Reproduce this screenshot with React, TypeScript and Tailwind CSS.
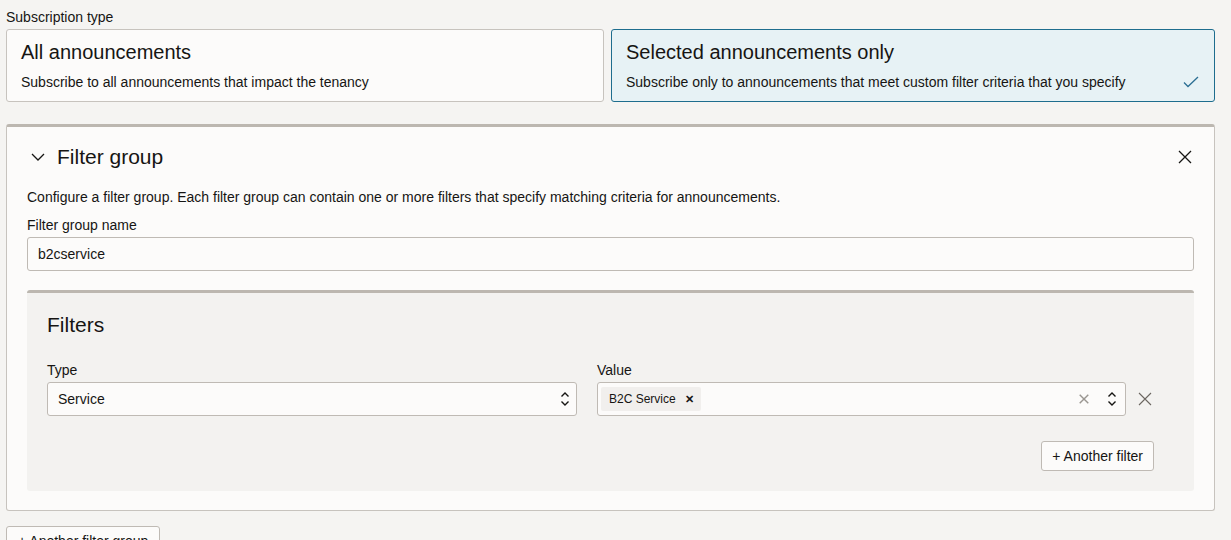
import React from 'react';

const font = "font-['Liberation_Sans',Arial,sans-serif]";

const UpDown: React.FC = () => (
  <svg width="10" height="16" viewBox="0 0 10 16" fill="none" stroke="#161513" strokeWidth="1.4">
    <path d="M1.5 5.5 L5 2 L8.5 5.5" />
    <path d="M1.5 10.5 L5 14 L8.5 10.5" />
  </svg>
);

const Cross: React.FC<{ size?: number; color?: string; width?: number }> = ({ size = 14, color = '#161513', width = 1.3 }) => (
  <svg width={size} height={size} viewBox="0 0 14 14" fill="none" stroke={color} strokeWidth={width}>
    <path d="M1 1 L13 13 M13 1 L1 13" />
  </svg>
);

const App: React.FC = () => {
  return (
    <div className={`${font} min-h-[540px] bg-[#f5f4f2] px-[6px] pt-[9px] text-[#161513]`}>
      <div className="mb-[4px] text-[14px] leading-[16px]">Subscription type</div>

      {/* subscription type cards */}
      <div className="grid grid-cols-[598px_1fr] gap-[7px] w-[1209px]">
        <div className="h-[73px] rounded-[3px] border border-[#c7c3be] bg-[#fcfbfa] px-[14px] pt-[10px]">
          <div className="text-[20px] leading-[24px]">All announcements</div>
          <div className="mt-[10px] text-[14px] leading-[16px]">Subscribe to all announcements that impact the tenancy</div>
        </div>
        <div className="h-[73px] rounded-[3px] border border-[#1e6d8e] bg-[#e7f2f5] pl-[14px] pr-[15px] pt-[10px]">
          <div className="text-[20px] leading-[24px]">Selected announcements only</div>
          <div className="mt-[10px] flex items-center justify-between text-[14px] leading-[16px]">
            <span>Subscribe only to announcements that meet custom filter criteria that you specify</span>
            <svg width="16" height="12" viewBox="0 0 16 12" fill="none" stroke="#2c6f93" strokeWidth="1.3">
              <path d="M1 6.5 L5 10.5 L15 1" />
            </svg>
          </div>
        </div>
      </div>

      {/* filter group panel */}
      <div className="mt-[22px] w-[1209px] rounded-[3px] border border-t-[3px] border-[#c7c3be] border-t-[#bcb7b0] bg-[#fcfbfa] px-[20px] pb-[19px]">
        <div className="flex h-[58px] items-center justify-between pt-[2px]">
          <div className="flex items-center gap-[12px]">
            <svg className="ml-[4px]" width="14" height="8" viewBox="0 0 14 8" fill="none" stroke="#161513" strokeWidth="1.3">
              <path d="M1 1 L7 7 L13 1" />
            </svg>
            <span className="text-[21px] leading-[24px]">Filter group</span>
          </div>
          <div className="mr-[2px]">
            <Cross />
          </div>
        </div>

        <div className="mt-[4px] text-[14px] leading-[16px]">
          Configure a filter group. Each filter group can contain one or more filters that specify matching criteria for announcements.
        </div>
        <div className="mt-[12px] text-[14px] leading-[16px]">Filter group name</div>
        <div className="mt-[4px] flex h-[34px] items-center rounded-[3px] border border-[#bfbab4] bg-[#fcfbfa] px-[10px] text-[14px]">
          b2cservice
        </div>

        {/* filters */}
        <div className="mt-[19px] rounded-[3px] border-t-[3px] border-[#bcb7b0] bg-[#f3f2f0] px-[20px] pb-[20px]">
          <div className="pt-[20px] text-[21px] leading-[24px]">Filters</div>

          <div className="mt-[25px] grid grid-cols-[530px_1fr] gap-x-[20px]">
            <div>
              <div className="mb-[4px] text-[14px] leading-[16px]">Type</div>
              <div className="flex h-[34px] items-center justify-between rounded-[3px] border border-[#bfbab4] bg-[#fcfbfa] pl-[10px] pr-[6px] text-[14px]">
                <span>Service</span>
                <UpDown />
              </div>
            </div>
            <div>
              <div className="mb-[4px] text-[14px] leading-[16px]">Value</div>
              <div className="flex items-center">
                <div className="flex h-[34px] w-[529px] items-center justify-between rounded-[3px] border border-[#bfbab4] bg-[#fcfbfa] pl-[3px] pr-[8px]">
                  <span className="flex h-[24px] items-center gap-[9px] rounded-[2px] bg-[#f1efed] pl-[8px] pr-[7px] text-[12px]">
                    B2C Service
                    <span className="text-[11px] font-bold">✕</span>
                  </span>
                  <div className="flex items-center gap-[18px]">
                    <Cross size={10} color="#9a9691" width={2} />
                    <UpDown />
                  </div>
                </div>
                <div className="ml-[12px] flex items-center">
                  <Cross size={14} color="#6b6661" width={1.1} />
                </div>
              </div>
            </div>
          </div>

          <div className="mt-[25px] flex justify-end pr-[20px]">
            <button className="h-[30px] rounded-[3px] border border-[#bfbab4] bg-[#fcfbfa] px-[10px] text-[14px] text-[#161513]">
              + Another filter
            </button>
          </div>
        </div>
      </div>

      <button className="mt-[15px] h-[30px] rounded-[3px] border border-[#bfbab4] bg-[#fcfbfa] px-[11px] text-[14px] text-[#161513]">
        + Another filter group
      </button>
    </div>
  );
};

export default App;
